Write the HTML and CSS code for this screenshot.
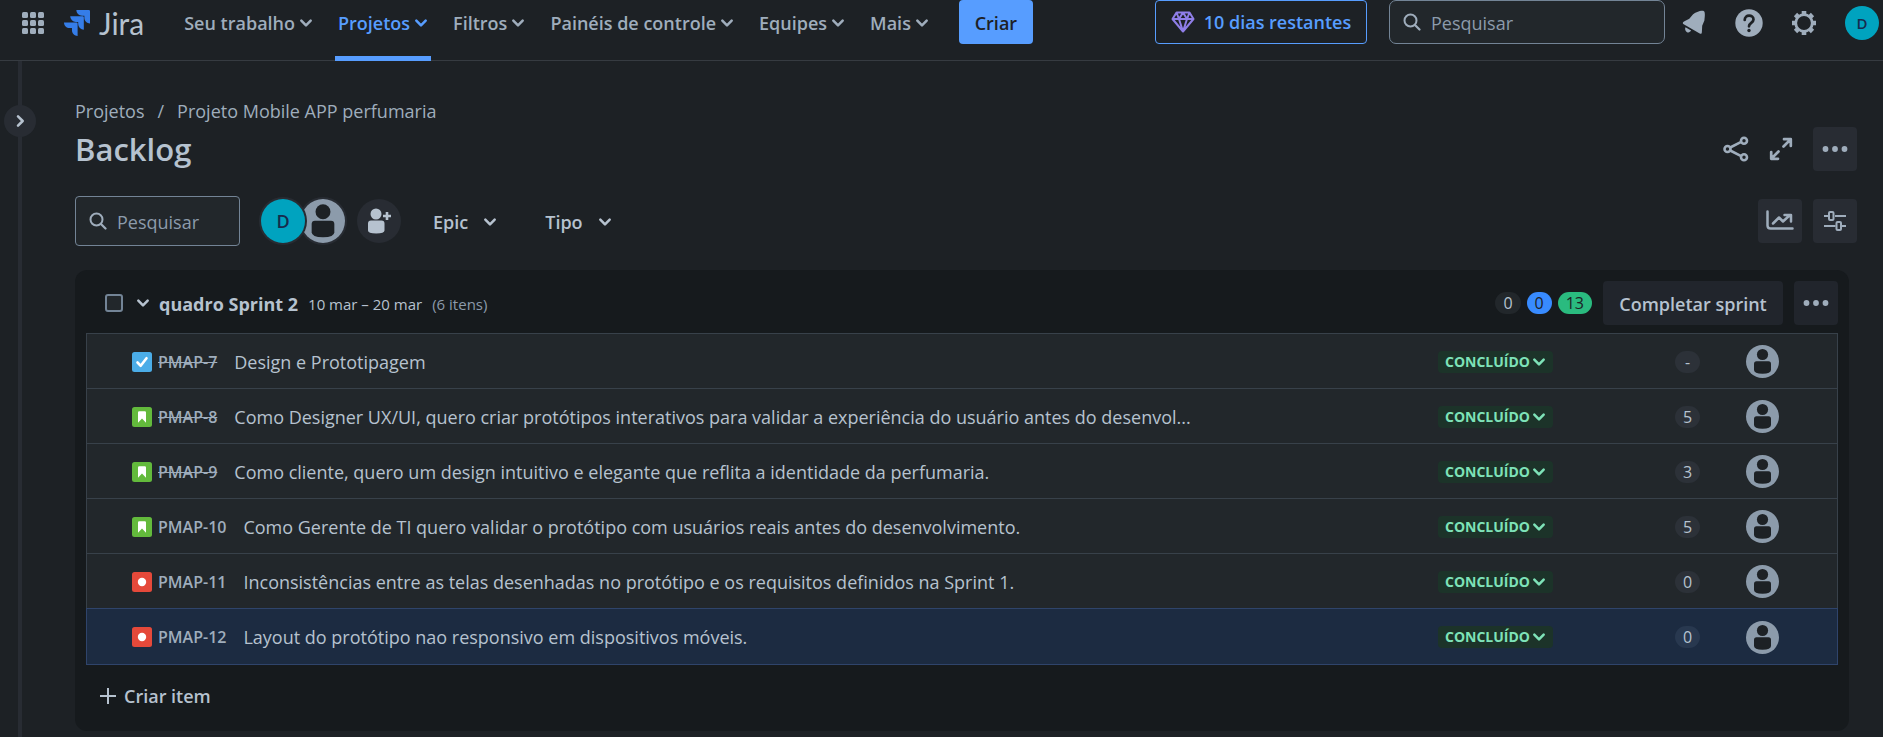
FILE: index.html
```html
<!DOCTYPE html>
<html lang="pt-BR">
<head>
<meta charset="utf-8">
<meta name="viewport" content="width=device-width, initial-scale=1">
<title>Backlog - Jira</title>
<link rel="stylesheet" href="styles.css">
</head>
<body>
<svg class="defs" width="0" height="0" aria-hidden="true">
  <symbol id="chevron" viewBox="0 0 12 12"><path d="M2 4l4 4 4-4" fill="none" stroke="currentColor" stroke-width="2.200" stroke-linecap="round" stroke-linejoin="round"/></symbol>
  <symbol id="search" viewBox="0 0 18 18"><circle cx="7.500" cy="7.500" r="6" fill="none" stroke="currentColor" stroke-width="2"/><path d="M12 12l4.500 4.500" stroke="currentColor" stroke-width="2.200" stroke-linecap="round"/></symbol>
  <symbol id="more" viewBox="0 0 26 6"><circle cx="3.500" cy="3" r="2.900" fill="currentColor"/><circle cx="13" cy="3" r="2.900" fill="currentColor"/><circle cx="22.500" cy="3" r="2.900" fill="currentColor"/></symbol>
  <symbol id="person" viewBox="0 0 33 33"><circle cx="16.500" cy="16.500" r="16.500" fill="#8c9bab"/><circle cx="16.500" cy="9.500" r="5.600" fill="#1d2125"/><path d="M8 18.800q0-2.500 2.500-2.500h12q2.500 0 2.500 2.500v6.200q0 3.700-8.500 3.700t-8.500-3.700z" fill="#1d2125"/></symbol>
  <symbol id="task" viewBox="0 0 20 20"><rect width="20" height="20" rx="2.500" fill="#4bade8"/><path d="M5.500 10.500l3.200 3.300 5.800-7.600" fill="none" stroke="#fff" stroke-width="2.600" stroke-linecap="round" stroke-linejoin="round"/></symbol>
  <symbol id="story" viewBox="0 0 20 20"><rect width="20" height="20" rx="2.500" fill="#63ba3c"/><path d="M6 5.500q0-1.200 1.200-1.200h5.600q1.200 0 1.200 1.200v10.300l-4-4.300-4 4.300z" fill="#fff"/></symbol>
  <symbol id="bug" viewBox="0 0 20 20"><rect width="20" height="20" rx="2.500" fill="#e5493a"/><circle cx="10" cy="10" r="4.200" fill="#fff"/></symbol>
</svg>

<header class="topbar">
  <button class="icon-btn switcher" aria-label="Alternar apps"><svg width="24" height="24" viewBox="0 0 24 24" fill="currentColor"><rect x="1" y="1" width="6" height="6" rx="1.500"/><rect x="9" y="1" width="6" height="6" rx="1.500"/><rect x="17" y="1" width="6" height="6" rx="1.500"/><rect x="1" y="9" width="6" height="6" rx="1.500"/><rect x="9" y="9" width="6" height="6" rx="1.500"/><rect x="17" y="9" width="6" height="6" rx="1.500"/><rect x="1" y="17" width="6" height="6" rx="1.500"/><rect x="9" y="17" width="6" height="6" rx="1.500"/><rect x="17" y="17" width="6" height="6" rx="1.500"/></svg></button>
  <a class="logo" href="#"><svg width="26" height="26" viewBox="2 2 20 20" fill="#357de8" aria-hidden="true"><path d="M11.530 2c0 2.400 1.970 4.350 4.350 4.350h1.780v1.700c0 2.400 1.940 4.340 4.340 4.350V2.840a.84.84 0 0 0-.84-.84zM6.770 6.800a4.360 4.360 0 0 0 4.340 4.340h1.800v1.720a4.360 4.360 0 0 0 4.340 4.340V7.630a.83.83 0 0 0-.83-.83zM2 11.600c0 2.400 1.950 4.340 4.350 4.340h1.780v1.720c.01 2.390 1.950 4.340 4.340 4.340v-9.570a.84.84 0 0 0-.84-.83z"/></svg><span>Jira</span></a>
  <nav class="nav">
    <button class="nav-item">Seu trabalho<svg class="chev"><use href="#chevron"/></svg></button>
    <button class="nav-item active">Projetos<svg class="chev"><use href="#chevron"/></svg></button>
    <button class="nav-item">Filtros<svg class="chev"><use href="#chevron"/></svg></button>
    <button class="nav-item">Painéis de controle<svg class="chev"><use href="#chevron"/></svg></button>
    <button class="nav-item">Equipes<svg class="chev"><use href="#chevron"/></svg></button>
    <button class="nav-item">Mais<svg class="chev"><use href="#chevron"/></svg></button>
  </nav>
  <button class="create">Criar</button>
  <button class="trial"><svg width="24" height="22" viewBox="0 0 24 22" fill="none" stroke="#8f7ee7" stroke-width="2" stroke-linejoin="round" aria-hidden="true"><path d="M5.500 1.500h13l4 6.500L12 20.500 1.500 8zM1.500 8h21M5.500 1.500L8 8l4 12.500L16 8l2.500-6.500M8 8l4-6.500L16 8"/></svg>10 dias restantes</button>
  <label class="search-box top-search"><svg width="18" height="18"><use href="#search"/></svg><input type="search" placeholder="Pesquisar" aria-label="Pesquisar no Jira"></label>
  <div class="top-icons">
    <button class="icon-btn" aria-label="Notificações"><svg width="26" height="26" viewBox="0 0 26 26" fill="currentColor"><path d="M23 1.200c1.400.8.700 6.300.4 9.200l-2.200 5.300-.3 6.100c0 1.900-.8 2.500-2.200 1.600L2.700 14.300c-1.400-.8-1.100-2.100.3-2.700l5.300-2.900 3.800-4.400C14.400 2.500 20.500-.2 23 1.200z"/><path d="M4.500 17.300l5.600 3.300c-1 1.800-2.900 2.300-4.400 1.300s-2-2.800-1.200-4.600z"/></svg></button>
    <button class="icon-btn" aria-label="Ajuda"><svg width="28" height="28" viewBox="0 0 28 28"><circle cx="14" cy="14" r="13.700" fill="currentColor"/><path d="M9.700 11c0-6 8.800-5.700 8.800-.5 0 3.500-4.500 3.300-4.500 6.800" fill="none" stroke="#1d2125" stroke-width="2.700" stroke-linecap="round"/><circle cx="14" cy="21.500" r="1.700" fill="#1d2125"/></svg></button>
    <button class="icon-btn" aria-label="Configurações"><svg width="26" height="26" viewBox="0 0 26 26" fill="none" stroke="currentColor"><circle cx="13" cy="13" r="8.300" stroke-width="2.800"/><path d="M13 1v3.500M13 21.500V25M1 13h3.500M21.500 13H25M4.500 4.500L7 7M19 19l2.500 2.500M4.500 21.500L7 19M19 7l2.500-2.500" stroke-width="4.600"/></svg></button>
    <button class="avatar letter small" aria-label="Perfil">D</button>
  </div>
</header>

<div class="shell">
  <aside class="rail"><button class="expand" aria-label="Expandir barra lateral"><svg width="14" height="14" viewBox="0 0 12 12"><path d="M4.300 2l4 4-4 4" fill="none" stroke="currentColor" stroke-width="2.200" stroke-linecap="round" stroke-linejoin="round"/></svg></button></aside>
  <main class="main">
    <nav class="crumbs" aria-label="Trilha"><a href="#">Projetos</a><span>/</span><a href="#">Projeto Mobile APP perfumaria</a></nav>
    <div class="title-row">
      <h1>Backlog</h1>
      <div class="actions">
        <button class="icon-btn" aria-label="Compartilhar"><svg width="26" height="26" viewBox="0 0 26 26" fill="none" stroke="currentColor" stroke-width="2.600"><circle cx="4.500" cy="13" r="3"/><circle cx="21" cy="4.700" r="3"/><circle cx="21" cy="21.300" r="3"/><path d="M7.200 11.500l11-5.600M7.200 14.500l11 5.600"/></svg></button>
        <button class="icon-btn" aria-label="Tela cheia"><svg width="24" height="24" viewBox="0 0 24 24" fill="none" stroke="currentColor" stroke-width="2.700" stroke-linecap="round" stroke-linejoin="round"><path d="M15 2.200h6.800V9M21.500 2.500l-7 7M9 21.800H2.200V15M2.500 21.500l7-7"/></svg></button>
        <button class="square" aria-label="Mais ações"><svg width="26" height="6"><use href="#more"/></svg></button>
      </div>
    </div>
    <div class="toolbar">
      <label class="search-box board-search"><svg width="18" height="18"><use href="#search"/></svg><input type="search" placeholder="Pesquisar" aria-label="Pesquisar no backlog"></label>
      <div class="people">
        <button class="avatar letter ring" aria-label="Filtrar por D">D</button>
        <button class="avatar ring under" aria-label="Não atribuído"><svg width="44" height="44"><use href="#person"/></svg></button>
      </div>
      <button class="avatar add" aria-label="Adicionar pessoas"><svg width="24" height="26" viewBox="0 0 24 26" fill="currentColor"><circle cx="9" cy="6" r="5.500"/><path d="M1 15.500q0-3 3-3h10.500q3 0 3 3v7q0 3-8.300 3T1 22.500zM18.700 4h2.600v2.700H24v2.600h-2.700V12h-2.600V9.300H16V6.700h2.700z"/></svg></button>
      <button class="filter">Epic<svg class="chev"><use href="#chevron"/></svg></button>
      <button class="filter">Tipo<svg class="chev"><use href="#chevron"/></svg></button>
      <div class="tools">
        <button class="square" aria-label="Insights"><svg width="28" height="22" viewBox="0 0 28 22" fill="none" stroke="currentColor" stroke-width="2.500" stroke-linecap="round" stroke-linejoin="round"><path d="M1.500 1.500v14q0 3 3 3h22M7 13.500l6-6 4 4 7-6.500M18.500 5H25v6.500"/></svg></button>
        <button class="square" aria-label="Configurações de exibição"><svg width="24" height="20" viewBox="0 0 24 20" fill="none" stroke="currentColor" stroke-width="2"><path d="M1 5h4.500M12 5h11M1 15h11.500M19 15h4"/><rect x="6" y="1" width="4.500" height="8" rx="1"/><rect x="13.500" y="11" width="4.500" height="8" rx="1"/></svg></button>
      </div>
    </div>

    <section class="sprint">
      <header class="sprint-head">
        <input type="checkbox" class="check" aria-label="Selecionar sprint">
        <button class="fold" aria-label="Recolher"><svg class="chev"><use href="#chevron"/></svg></button>
        <h2>quadro Sprint 2</h2>
        <span class="dates">10 mar – 20 mar</span>
        <span class="count">(6 itens)</span>
        <div class="sprint-actions">
          <div class="totals"><span class="pill">0</span><span class="pill blue">0</span><span class="pill green">13</span></div>
          <button class="complete">Completar sprint</button>
          <button class="square" aria-label="Mais"><svg width="26" height="6"><use href="#more"/></svg></button>
        </div>
      </header>
      <ul class="issues">
        <li class="issue"><svg class="type"><use href="#task"/></svg><a class="key done" href="#">PMAP-7</a><span class="summary">Design e Prototipagem</span><button class="status">CONCLUÍDO<svg class="chev"><use href="#chevron"/></svg></button><span class="pill">-</span><svg class="who"><use href="#person"/></svg></li>
        <li class="issue"><svg class="type"><use href="#story"/></svg><a class="key done" href="#">PMAP-8</a><span class="summary">Como Designer UX/UI, quero criar protótipos interativos para validar a experiência do usuário antes do desenvol...</span><button class="status">CONCLUÍDO<svg class="chev"><use href="#chevron"/></svg></button><span class="pill">5</span><svg class="who"><use href="#person"/></svg></li>
        <li class="issue"><svg class="type"><use href="#story"/></svg><a class="key done" href="#">PMAP-9</a><span class="summary">Como cliente, quero um design intuitivo e elegante que reflita a identidade da perfumaria.</span><button class="status">CONCLUÍDO<svg class="chev"><use href="#chevron"/></svg></button><span class="pill">3</span><svg class="who"><use href="#person"/></svg></li>
        <li class="issue"><svg class="type"><use href="#story"/></svg><a class="key" href="#">PMAP-10</a><span class="summary">Como Gerente de TI quero validar o protótipo com usuários reais antes do desenvolvimento.</span><button class="status">CONCLUÍDO<svg class="chev"><use href="#chevron"/></svg></button><span class="pill">5</span><svg class="who"><use href="#person"/></svg></li>
        <li class="issue"><svg class="type"><use href="#bug"/></svg><a class="key" href="#">PMAP-11</a><span class="summary">Inconsistências entre as telas desenhadas no protótipo e os requisitos definidos na Sprint 1.</span><button class="status">CONCLUÍDO<svg class="chev"><use href="#chevron"/></svg></button><span class="pill">0</span><svg class="who"><use href="#person"/></svg></li>
        <li class="issue selected"><svg class="type"><use href="#bug"/></svg><a class="key" href="#">PMAP-12</a><span class="summary">Layout do protótipo nao responsivo em dispositivos móveis.</span><button class="status">CONCLUÍDO<svg class="chev"><use href="#chevron"/></svg></button><span class="pill">0</span><svg class="who"><use href="#person"/></svg></li>
      </ul>
      <button class="new-item"><svg width="18" height="18" viewBox="0 0 18 18" stroke="currentColor" stroke-width="2"><path d="M9 1v16M1 9h16"/></svg>Criar item</button>
    </section>
  </main>
</div>
</body>
</html>
```
FILE: styles.css
```css
* { box-sizing: border-box; }
body {
  margin: 0;
  min-height: 100vh;
  display: flex;
  flex-direction: column;
  background: #1d2125;
  color: #b6c2cf;
  font: 18px/24px "Segoe UI", "Open Sans", "Noto Sans", sans-serif;
}
button, input { font: inherit; color: inherit; }
button {
  display: flex;
  align-items: center;
  justify-content: center;
  padding: 0;
  border: 0;
  background: none;
  white-space: nowrap;
}
a { color: inherit; text-decoration: none; }
svg { display: block; flex: none; }
.defs { position: absolute; }
.chev { width: 14px; height: 14px; }

.topbar {
  display: flex;
  align-items: flex-start;
  height: 61px;
  padding-left: 21px;
  border-bottom: 1px solid #363b41;
  color: #9fadbc;
}
.icon-btn { height: 46px; }
.logo {
  display: flex;
  align-items: center;
  gap: 9px;
  height: 46px;
  margin-left: 19px;
  color: #b6c2cf;
  font: 30px/44px Lato, sans-serif;
}
.nav { display: flex; gap: 25px; margin-left: 40px; }
.nav-item {
  gap: 4px;
  height: 61px;
  padding: 0 0 15px;
  font-weight: 600;
  border-bottom: 0 solid #579dff;
}
.nav-item.active {
  margin: 0 -3px;
  padding: 0 3px 10px;
  border-bottom-width: 5px;
  color: #579dff;
}
.create {
  width: 74px;
  height: 44px;
  margin-left: 30px;
  padding-top: 2px;
  border-radius: 4px;
  background: #579dff;
  color: #1d2125;
  font-weight: 600;
}
.trial {
  gap: 9px;
  width: 212px;
  height: 44px;
  margin-left: auto;
  border: 1px solid #579dff;
  border-radius: 4px;
  color: #579dff;
  font-weight: 600;
}
.search-box {
  display: flex;
  align-items: center;
  gap: 10px;
  padding: 0 13px;
  border: 1px solid #738496;
  border-radius: 4px;
  background: #22272b;
  color: #9fadbc;
}
.search-box input {
  flex: 1;
  min-width: 0;
  padding: 2px 0 0;
  border: 0;
  outline: 0;
  background: none;
}
.search-box input::placeholder { color: #8c9bab; opacity: 1; }
.top-search { width: 276px; height: 44px; margin-left: 22px; border-radius: 7px; }
.top-icons { display: flex; align-items: center; gap: 28px; height: 45px; margin: 0 4px 0 16px; }

.avatar { flex: none; width: 44px; height: 44px; border-radius: 50%; }
.letter { background: #00a3bf; color: #172b4d; font-weight: 600; }
.small { width: 34px; height: 34px; font-size: 15px; }

.shell { display: flex; flex: 1; }
.rail {
  flex: none;
  width: 4px;
  margin-left: 18px;
  background: #282c33;
}
.expand {
  width: 32px;
  height: 32px;
  margin: 44px -14px 0;
  border-radius: 50%;
  background: #282c33;
}
.main { flex: 1; min-width: 0; padding: 38px 26px 5px 53px; }
.crumbs { display: flex; gap: 13px; color: #9fadbc; }
.title-row { display: flex; align-items: center; height: 44px; margin-top: 4px; }
h1 { margin: 0; font-size: 31px; line-height: 40px; font-weight: 600; }
.actions { display: flex; gap: 20px; align-items: center; margin-left: auto; color: #9fadbc; }
.square {
  width: 44px;
  height: 44px;
  border-radius: 4px;
  background: #282c33;
  color: #9fadbc;
}
.toolbar { display: flex; align-items: center; height: 50px; margin-top: 25px; }
.board-search { width: 165px; height: 50px; }
.people { display: flex; margin-left: 21px; }
.ring { box-shadow: 0 0 0 2px #282c33; z-index: 1; }
.under { margin-left: -4px; z-index: 0; }
.add { margin-left: 12px; background: #282c33; }
.filter { gap: 15px; margin-left: 32px; padding-top: 2px; font-weight: 600; }
.filter + .filter { margin-left: 48px; }
.tools { display: flex; gap: 11px; margin-left: auto; }

.sprint {
  margin: 24px 8px 0 0;
  padding: 11px 11px 13px;
  border-radius: 12px;
  background: #161a1d;
}
.sprint-head { display: flex; align-items: center; height: 44px; padding-left: 19px; }
.check {
  appearance: none;
  width: 18px;
  height: 18px;
  margin: 0;
  border: 2px solid #738496;
  border-radius: 3px;
  background: #22272b;
}
.fold { margin: 0 9px 0 13px; }
h2 { margin: 0; padding-top: 2px; font-size: 18px; line-height: 24px; font-weight: 700; }
.dates, .count { margin-left: 10px; padding-top: 2px; font-size: 15px; }
.count { color: #8c9bab; }
.sprint-actions { display: flex; align-items: center; gap: 11px; margin-left: auto; }
.sprint .square, .complete { background: #21252c; }
.totals { display: flex; gap: 6px; }
.pill {
  justify-self: start;
  min-width: 25px;
  padding: 0 8px;
  border-radius: 11px;
  background: #22272b;
  font-size: 16px;
  line-height: 22px;
  text-align: center;
}
.blue { background: #388bff; color: #1d2125; }
.green { background: #2abb7f; color: #1d2125; }
.complete { width: 180px; height: 44px; padding-top: 2px; border-radius: 4px; font-weight: 600; }

.issues { margin: 8px 0 0; padding: 0; list-style: none; border: 1px solid #38414a; border-bottom: 0; }
.issue {
  display: grid;
  grid-template-columns: 20px auto 1fr 237px 71px 33px;
  align-items: center;
  height: 55px;
  padding: 1px 58px 0 45px;
  border-bottom: 1px solid #38414a;
  background: #22272b;
}
.issue .pill { background: #2c3138; }
.issue.selected {
  height: 57px;
  margin: -1px;
  border: 1px solid #2f446b;
  background: #1c2b41;
}
.issue.selected .pill { background: #28384f; }
.type { width: 20px; height: 20px; }
.key { margin-left: 6px; font-size: 16px; font-weight: 600; color: #9fadbc; }
.done { text-decoration: line-through; }
.summary { margin-left: 17px; overflow: hidden; white-space: nowrap; text-overflow: ellipsis; }
.status {
  gap: 2px;
  width: 115px;
  height: 22px;
  border-radius: 4px;
  background: #1c3329;
  color: #7ee2b8;
  font-size: 14px;
  line-height: 20px;
  font-weight: 700;
}
.who { width: 33px; height: 33px; }
.new-item { gap: 7px; height: 44px; margin: 10px 0 0 13px; font-weight: 600; }
```
